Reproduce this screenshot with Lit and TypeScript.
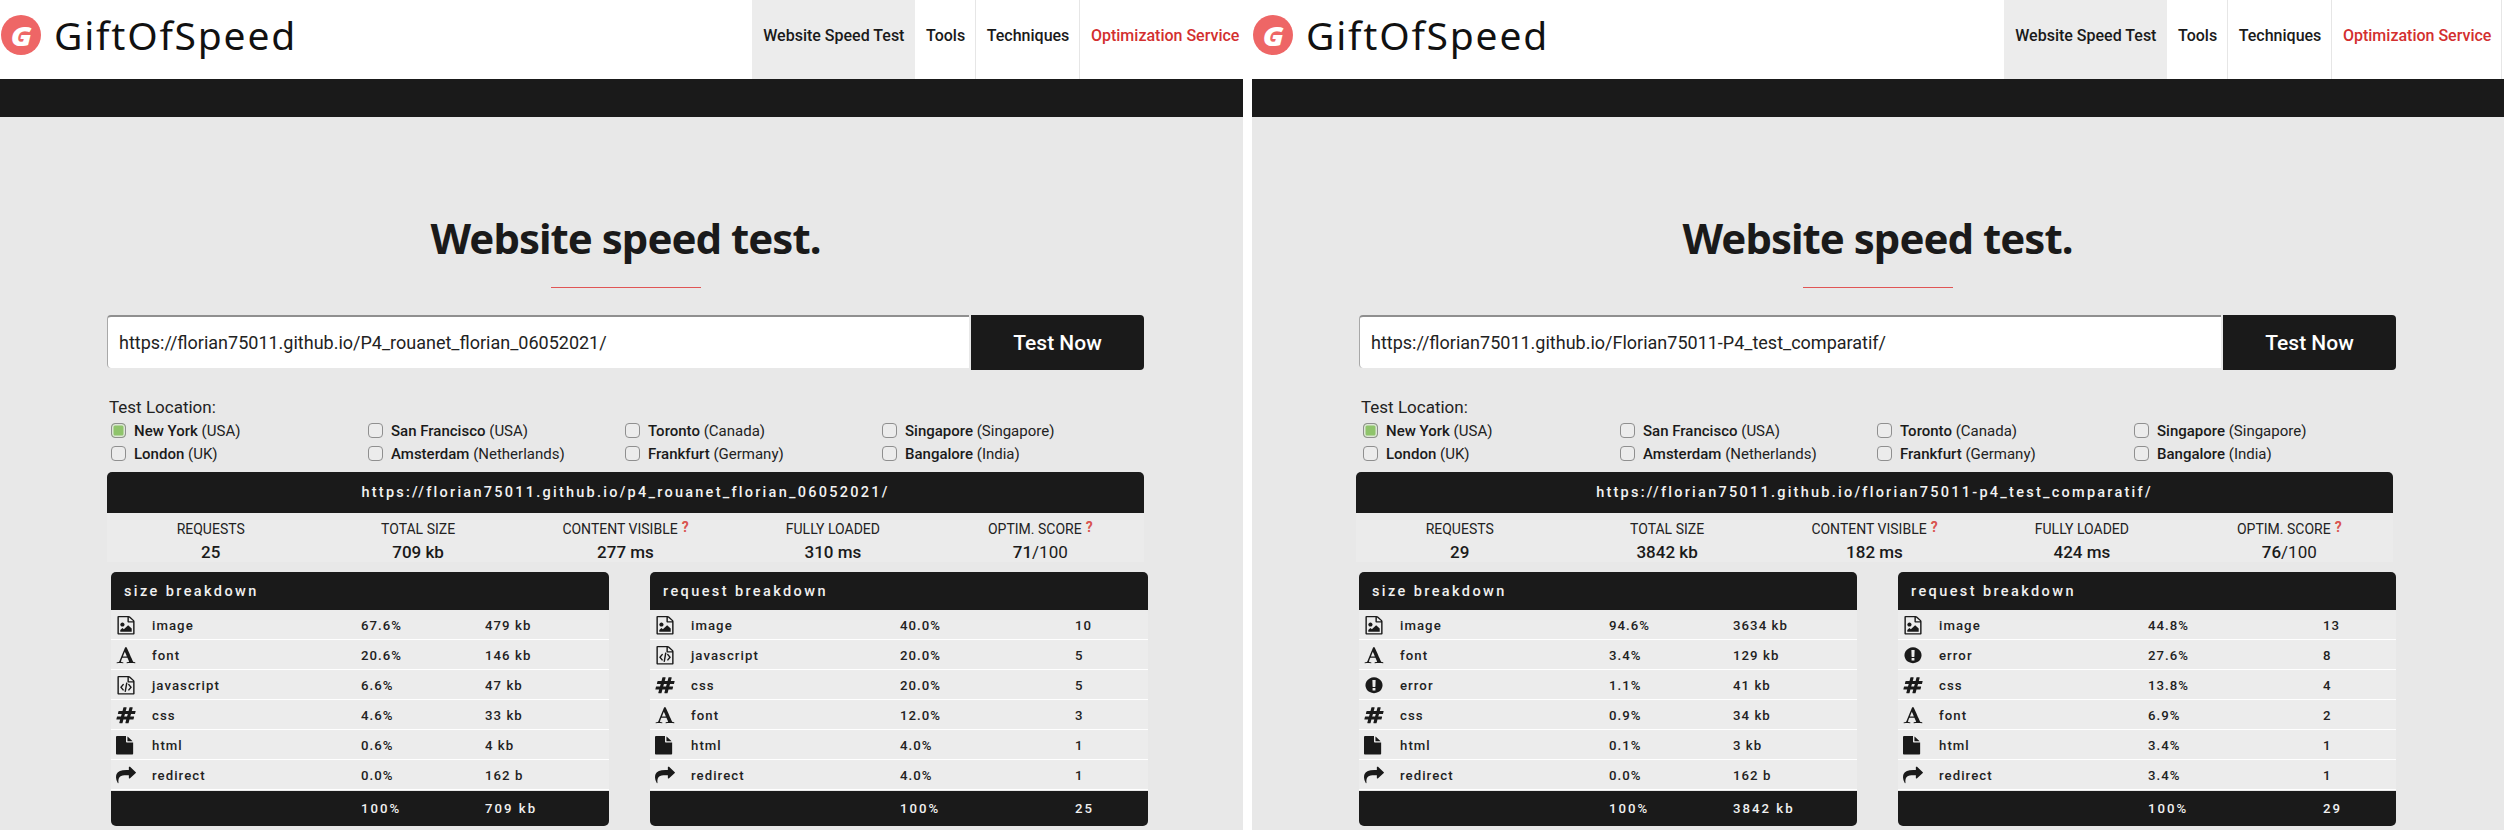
import { LitElement, html, css, svg } from "lit";
import { customElement, property } from "lit/decorators.js";

const ICONS: Record<string, string> = {
  image: "M1596 380q28 28 48 76t20 88v1152q0 40-28 68t-68 28h-1344q-40 0-68-28t-28-68v-1600q0-40 28-68t68-28h896q40 0 88 20t76 48zm-444-244v376h376q-10-29-22-41l-313-313q-12-12-41-22zm384 1528v-1024h-416q-40 0-68-28t-28-68v-416h-768v1536h1280zm-128-448v320h-1024v-192l192-192 128 128 384-384zm-832-192q-80 0-136-56t-56-136 56-136 136-56 136 56 56 136-56 136-136 56z",
  javascript: "M1596 380q28 28 48 76t20 88v1152q0 40-28 68t-68 28h-1344q-40 0-68-28t-28-68v-1600q0-40 28-68t68-28h896q40 0 88 20t76 48zm-444-244v376h376q-10-29-22-41l-313-313q-12-12-41-22zm384 1528v-1024h-416q-40 0-68-28t-28-68v-416h-768v1536h1280zm-928-896q8-11 21-12.5t24 6.5l51 38q11 8 12.5 21t-6.5 24l-182 243 182 243q8 11 6.5 24t-12.5 21l-51 38q-11 8-24 6.5t-21-12.5l-226-301q-14-19 0-38zm802 301q14 19 0 38l-226 301q-8 11-21 12.5t-24-6.5l-51-38q-11-8-12.5-21t6.5-24l182-243-182-243q-8-11-6.5-24t12.5-21l51-38q11-8 24-6.5t21 12.5zm-620 461q-13-2-20.5-13t-5.5-24l138-831q2-13 13-20.5t24-5.5l63 10q13 2 20.5 13t5.5 24l-138 831q-2 13-13 20.5t-24 5.5z",
  font: "M789 559l-170 450q33 0 136.5 2t160.5 2q19 0 57-2-87-253-184-452zm-725 1105l2-79q23-7 56-12.5t57-10.5 49.5-14.5 44.5-29 31-50.5l237-616 280-724h128q8 14 11 21l205 480q33 78 106 257.5t114 274.5q15 34 58 144.5t72 168.5q20 45 35 57 19 15 88 29.5t84 20.5q6 38 6 57 0 5-.5 13.5t-.5 12.5q-63 0-190-8t-191-8q-76 0-215 7t-178 8q0-43 4-78l131-28q1 0 12.5-2.5t15.5-3.5 14.5-4.5 15-6.5 11-8 9-11 2.5-14q0-16-31-96.5t-72-177.5-42-100l-450-2q-26 58-76.5 195.5t-50.5 162.5q0 22 14 37.5t43.5 24.5 48.5 13.5 57 8.5 41 4q1 19 1 58 0 9-2 27-58 0-174.5-10t-174.5-10q-8 0-26.5 4t-21.5 4q-80 14-188 14z",
  css: "M991 1024l64-256h-254l-64 256h254zm768-504l-56 224q-7 24-31 24h-327l-64 256h311q15 0 25 12 10 14 6 28l-56 224q-5 24-31 24h-327l-81 328q-7 24-31 24h-224q-16 0-26-12-9-12-6-28l78-312h-254l-81 328q-7 24-31 24h-225q-15 0-25-12-9-12-6-28l78-312h-311q-15 0-25-12-9-12-6-28l56-224q7-24 31-24h327l64-256h-311q-15 0-25-12-10-14-6-28l56-224q5-24 31-24h327l81-328q7-24 32-24h224q15 0 25 12 9 12 6 28l-78 312h254l81-328q7-24 32-24h224q15 0 25 12 9 12 6 28l-78 312h311q15 0 25 12 9 12 6 28z",
  html: "M1024 512v-472q22 14 36 28l408 408q14 14 28 36h-472zm-128 32q0 40 28 68t68 28h544v1056q0 40-28 68t-68 28h-1344q-40 0-68-28t-28-68v-1600q0-40 28-68t68-28h800v544z",
  redirect: "M1792 640q0 26-19 45l-512 512q-19 19-45 19t-45-19-19-45v-256h-224q-98 0-175.5 6t-154 21.5-133 42.5-105.5 69.5-80 101-48.5 138.5-17.5 181q0 55 5 123 0 6 2.5 23.5t2.5 26.5q0 15-8.5 25t-23.5 10q-16 0-28-17-7-9-13-22t-13.5-30-10.5-24q-127-285-127-451 0-199 53-333 162-403 875-403h224v-256q0-26 19-45t45-19 45 19l512 512q19 19 19 45z",
  error: "M896 128q209 0 385.5 103t279.5 279.5 103 385.5-103 385.5-279.5 279.5-385.5 103-385.5-103-279.5-279.5-103-385.5 103-385.5 279.5-279.5 385.5-103zm128 1247v-190q0-14-9-23.5t-22-9.5h-192q-13 0-23 10t-10 23v190q0 13 10 23t23 10h192q13 0 22-9.5t9-23.5zm-2-344l18-621q0-12-10-18-10-8-24-8h-220q-14 0-24 8-10 6-10 18l17 621q0 10 10 17.5t24 7.5h185q14 0 23.5-7.5t10.5-17.5z",
};

type Row = [string, string, string];

interface Report {
  input: string;
  url: string;
  stats: { label: string; value: string; suffix?: string; help?: boolean }[];
  size: Row[];
  sizeTotal: string;
  req: Row[];
  reqTotal: string;
}

const REPORTS: Report[] = [
  {
    input: "https://florian75011.github.io/P4_rouanet_florian_06052021/",
    url: "https://florian75011.github.io/p4_rouanet_florian_06052021/",
    stats: [
      { label: "REQUESTS", value: "25" },
      { label: "TOTAL SIZE", value: "709 kb" },
      { label: "CONTENT VISIBLE", value: "277 ms", help: true },
      { label: "FULLY LOADED", value: "310 ms" },
      { label: "OPTIM. SCORE", value: "71", suffix: "/100", help: true },
    ],
    size: [
      ["image", "67.6%", "479 kb"],
      ["font", "20.6%", "146 kb"],
      ["javascript", "6.6%", "47 kb"],
      ["css", "4.6%", "33 kb"],
      ["html", "0.6%", "4 kb"],
      ["redirect", "0.0%", "162 b"],
    ],
    sizeTotal: "709 kb",
    req: [
      ["image", "40.0%", "10"],
      ["javascript", "20.0%", "5"],
      ["css", "20.0%", "5"],
      ["font", "12.0%", "3"],
      ["html", "4.0%", "1"],
      ["redirect", "4.0%", "1"],
    ],
    reqTotal: "25",
  },
  {
    input: "https://florian75011.github.io/Florian75011-P4_test_comparatif/",
    url: "https://florian75011.github.io/florian75011-p4_test_comparatif/",
    stats: [
      { label: "REQUESTS", value: "29" },
      { label: "TOTAL SIZE", value: "3842 kb" },
      { label: "CONTENT VISIBLE", value: "182 ms", help: true },
      { label: "FULLY LOADED", value: "424 ms" },
      { label: "OPTIM. SCORE", value: "76", suffix: "/100", help: true },
    ],
    size: [
      ["image", "94.6%", "3634 kb"],
      ["font", "3.4%", "129 kb"],
      ["error", "1.1%", "41 kb"],
      ["css", "0.9%", "34 kb"],
      ["html", "0.1%", "3 kb"],
      ["redirect", "0.0%", "162 b"],
    ],
    sizeTotal: "3842 kb",
    req: [
      ["image", "44.8%", "13"],
      ["error", "27.6%", "8"],
      ["css", "13.8%", "4"],
      ["font", "6.9%", "2"],
      ["html", "3.4%", "1"],
      ["redirect", "3.4%", "1"],
    ],
    reqTotal: "29",
  },
];

const LOCATIONS = [
  ["New York", "(USA)"],
  ["San Francisco", "(USA)"],
  ["Toronto", "(Canada)"],
  ["Singapore", "(Singapore)"],
  ["London", "(UK)"],
  ["Amsterdam", "(Netherlands)"],
  ["Frankfurt", "(Germany)"],
  ["Bangalore", "(India)"],
];

@customElement("speed-panel")
class SpeedPanel extends LitElement {
  @property({ type: Number }) index = 0;

  static styles = css`
    :host { display: block; overflow: hidden; background: #fff; color: #1a1a1a; font-family: Roboto, "Liberation Sans", sans-serif; }
    .top { display: flex; width: 1252px; height: 79px; justify-content: space-between; background: #fff; }
    .brand { display: flex; align-items: center; gap: 13px; padding-left: 1px; height: 70px; }
    .mark { width: 40px; height: 40px; border-radius: 50%; background: #ee6666; display: flex; align-items: center; justify-content: center; }
    .mark span { display: block; color: #fff; font: italic 800 27px/1 "Open Sans", sans-serif; transform: scaleX(1.12); }
    .word { font: 400 39px "Noto Sans", sans-serif; letter-spacing: 1.8px; color: #111; padding-bottom: 2px; }
    .nav { display: flex; margin-right: 2px; }
    .nav a { display: flex; align-items: center; box-sizing: border-box; height: 79px; padding: 0 9.6px 8px 11px; font-size: 16px; font-weight: 500; color: #1a1a1a; border-right: 1px solid #e6e6e6; }
    .nav a.on { background: #ececec; border-right-color: #ececec; }
    .nav a.red { color: #d32f2f; }
    .bar { height: 38px; background: #1a1a1a; }
    main { height: 713px; background: #e8e8e8; box-sizing: border-box; padding: 0 0 0 107px; overflow: hidden; }
    h1 { width: 1037px; margin: 0; padding-top: 91px; text-align: center; font: 700 42px/60px "Noto Sans", sans-serif; letter-spacing: -1px; color: #1a1a1a; }
    .rule { width: 150px; height: 1px; background: #e05555; margin: 19px auto 0; }
    .rulewrap { width: 1037px; }
    form { display: flex; width: 1037px; margin-top: 27px; align-items: flex-start; }
    .input { flex: 1; height: 53px; box-sizing: border-box; background: #fff; border-top: 2px solid #8f8f8f; border-left: 1px solid #a8a8a8; border-radius: 4px 0 0 4px; padding-left: 11px; display: flex; align-items: center; font-size: 18px; color: #222; }
    .go { width: 173px; height: 55px; margin-left: 2px; background: #1a1a1a; color: #fff; border-radius: 0 4px 4px 0; display: flex; align-items: center; justify-content: center; font-size: 21px; font-weight: 500; }
    .tl { margin: 27px 0 0 2px; font-size: 17px; line-height: 20px; color: #222; }
    .locs { display: grid; grid-template-columns: repeat(4, 257px); margin: 2px 0 0 4px; grid-auto-rows: 23px; }
    .loc { display: flex; align-items: center; font-size: 15px; color: #222; }
    .loc b { font-weight: 500; color: #1a1a1a; }
    .box { width: 15px; height: 15px; box-sizing: border-box; border: 1px solid #8f8f8f; border-radius: 4px; background: #ececec; margin-right: 8px; flex: none; }
    .box.on { background: #8fc46b; box-shadow: inset 0 0 0 1.5px #dde6d6; }
    .results.shift { margin-left: -3px; }
    .rhead { width: 1037px; height: 41px; margin-top: 7px; background: #1a1a1a; border-radius: 5px 5px 0 0; color: #f2f2f2; display: flex; align-items: center; justify-content: center; font-size: 14.5px; font-weight: 500; letter-spacing: 2.25px; }
    .stats { width: 1037px; height: 49px; display: grid; grid-template-columns: repeat(5, 1fr); background: #ebebeb; text-align: center; }
    .stat { padding-top: 7px; }
    .lab { font-size: 14px; line-height: 18px; color: #222; }
    .lab i { font-style: normal; font-weight: 700; color: #d9534f; font-size: 14px; position: relative; top: -2px; margin-left: 4px; }
    .val { font-size: 17px; font-weight: 500; line-height: 20px; margin-top: 4px; }
    .val span { font-weight: 400; }
    .tables { display: flex; gap: 41px; margin: 10px 0 0 4px; }
    .shift .tables { margin-left: 3px; }
    .tbl { width: 498px; }
    .th { height: 38px; background: #1a1a1a; color: #f0f0f0; border-radius: 5px 5px 0 0; display: flex; align-items: center; padding-left: 13px; font-size: 14.5px; font-weight: 500; letter-spacing: 2.4px; }
    .row { display: grid; height: 30px; box-sizing: border-box; padding-top: 2px; border-bottom: 1px solid #fff; background: #ececec; align-items: center; font-size: 13.2px; font-weight: 500; letter-spacing: 1.05px; color: #222; }
    .tbl.size .row, .tbl.size .foot { grid-template-columns: 41px 209px 124px 1fr; }
    .tbl.req .row, .tbl.req .foot { grid-template-columns: 41px 209px 175px 1fr; }
    .row svg { width: 20px; height: 18.5px; margin-left: 5px; display: block; fill: #1a1a1a; }
    .foot { display: grid; height: 35px; margin-top: 1px; background: #1a1a1a; color: #f0f0f0; border-radius: 0 0 5px 5px; align-items: center; font-size: 13.2px; font-weight: 500; letter-spacing: 2px; }
  `;

  private table(cls: string, title: string, rows: Row[], total: string) {
    return html`<div class="tbl ${cls}">
      <div class="th">${title}</div>
      ${rows.map(
        ([n, p, v]) => html`<div class="row">
          <svg viewBox="0 0 1792 1792" preserveAspectRatio="none">${svg`<path d=${ICONS[n]}></path>`}</svg>
          <span>${n}</span><span>${p}</span><span>${v}</span>
        </div>`
      )}
      <div class="foot"><span></span><span></span><span>100%</span><span>${total}</span></div>
    </div>`;
  }

  render() {
    const r = REPORTS[this.index];
    return html`
      <div class="top">
        <div class="brand"><div class="mark"><span>G</span></div><div class="word">GiftOfSpeed</div></div>
        <nav class="nav">
          <a class="on">Website Speed Test</a><a>Tools</a><a>Techniques</a><a class="red">Optimization Service</a>
        </nav>
      </div>
      <div class="bar"></div>
      <main>
        <h1>Website speed test.</h1>
        <div class="rulewrap"><div class="rule"></div></div>
        <form><div class="input">${r.input}</div><div class="go">Test Now</div></form>
        <div class="tl">Test Location:</div>
        <div class="locs">
          ${LOCATIONS.map(
            ([a, b], i) => html`<div class="loc"><span class="box ${i === 0 ? "on" : ""}"></span><span><b>${a}</b> ${b}</span></div>`
          )}
        </div>
        <div class="results ${this.index ? "shift" : ""}">
          <div class="rhead">${r.url}</div>
          <div class="stats">
            ${r.stats.map(
              (s) => html`<div class="stat">
                <div class="lab">${s.label}${s.help ? html`<i>?</i>` : ""}</div>
                <div class="val">${s.value}${s.suffix ? html`<span>${s.suffix}</span>` : ""}</div>
              </div>`
            )}
          </div>
          <div class="tables">
            ${this.table("size", "size breakdown", r.size, r.sizeTotal)}
            ${this.table("req", "request breakdown", r.req, r.reqTotal)}
          </div>
        </div>
      </main>
    `;
  }
}

@customElement("app-root")
export class AppRoot extends LitElement {
  static styles = css`
    :host { display: grid; grid-template-columns: 1243px 1252px; column-gap: 9px; height: 830px; overflow: hidden; background: #fff; }
  `;
  render() {
    return html`<speed-panel .index=${0}></speed-panel><speed-panel .index=${1}></speed-panel>`;
  }
}
